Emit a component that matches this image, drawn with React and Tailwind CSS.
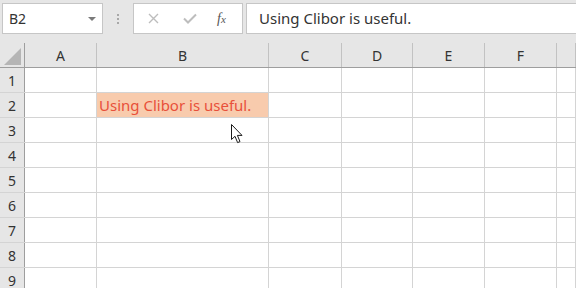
const cols = [
  { name: "A", w: "w-[72px]" },
  { name: "B", w: "w-[172px]" },
  { name: "C", w: "w-[73px]" },
  { name: "D", w: "w-[71px]" },
  { name: "E", w: "w-[72px]" },
  { name: "F", w: "w-[72px]" },
  { name: "", w: "flex-1" },
];

const rows = [1, 2, 3, 4, 5, 6, 7, 8, 9];

function Cursor() {
  return (
    <svg
      className="absolute left-[231px] top-[124px]"
      width="13"
      height="20"
      viewBox="0 0 13 20"
    >
      <path
        d="M0.5 0.5 L0.5 15.5 L4 12.3 L6.6 18.6 L9 17.6 L6.4 11.4 L11 11.4 Z"
        fill="#fff"
        stroke="#1a1a1a"
        strokeWidth="1"
        strokeLinejoin="miter"
      />
    </svg>
  );
}

export default function App() {
  return (
    <div
      className="relative w-[576px] h-[288px] overflow-hidden bg-white text-[#333]"
      style={{ fontFamily: '"Noto Sans", "Open Sans", sans-serif' }}
    >
      {/* formula bar */}
      <div className="h-[43px] bg-[#e6e6e6] flex items-start pt-[3px]">
        <div className="ml-[2px] w-[101px] h-[31px] bg-white border border-[#c6c6c6] flex items-center pl-[6px] pr-[6px]">
          <span className="text-[14px] leading-none">B2</span>
          <span className="ml-auto w-0 h-0 border-l-[4px] border-r-[4px] border-t-[4px] border-l-transparent border-r-transparent border-t-[#7a7a7a]" />
        </div>
        <div className="w-[30px] h-[31px] flex flex-col items-center justify-center gap-[2px]">
          <span className="w-[2px] h-[2px] bg-[#a8a8a8]" />
          <span className="w-[2px] h-[2px] bg-[#a8a8a8]" />
          <span className="w-[2px] h-[2px] bg-[#a8a8a8]" />
        </div>
        <div className="w-[110px] h-[31px] bg-white border border-[#c6c6c6] flex items-center">
          <svg className="ml-[14px]" width="11" height="11" viewBox="0 0 11 11">
            <path d="M1 1 L10 10 M10 1 L1 10" stroke="#bdbdbd" strokeWidth="1.4" />
          </svg>
          <svg className="ml-[24px]" width="14" height="11" viewBox="0 0 14 11">
            <path d="M1 5.5 L5 9.5 L13 1.5" stroke="#bdbdbd" strokeWidth="2" fill="none" />
          </svg>
          <span
            className="ml-[20px] text-[14px] italic text-[#555] leading-none"
            style={{ fontFamily: '"Liberation Serif", serif' }}
          >
            f<span className="text-[11px]">x</span>
          </span>
        </div>
        <div className="ml-[3px] flex-1 h-[31px] bg-white border border-r-0 border-[#c6c6c6] flex items-center pl-[12px]">
          <span className="text-[15px] leading-none">Using Clibor is useful.</span>
        </div>
      </div>

      {/* column headers */}
      <div className="flex h-[25px] bg-[#e6e6e6] border-b border-[#9e9e9e]">
        <div className="w-[25px] border-r border-[#9e9e9e] relative">
          <svg className="absolute left-[4px] top-[5px]" width="17" height="17" viewBox="0 0 17 17">
            <path d="M17 0 L17 17 L0 17 Z" fill="#b5b5b5" />
          </svg>
        </div>
        {cols.map((c, i) => (
          <div
            key={i}
            className={`${c.w} border-r border-[#c2c2c2] flex items-center justify-center text-[14px]`}
          >
            {c.name}
          </div>
        ))}
      </div>

      {/* grid rows */}
      {rows.map((r) => (
        <div key={r} className="flex h-[25px] border-b border-[#d4d4d4]">
          <div className="w-[25px] bg-[#e6e6e6] border-r border-[#9e9e9e] flex items-center justify-center text-[14px]">
            {r}
          </div>
          {cols.map((c, i) => (
            <div
              key={i}
              className={`${c.w} border-r border-[#d4d4d4] flex items-center ${
                r === 2 && i === 1 ? "bg-[#f8cbad] text-[#e8503a] pl-[2px]" : ""
              }`}
            >
              {r === 2 && i === 1 ? (
                <span className="text-[15px] leading-none whitespace-nowrap">Using Clibor is useful.</span>
              ) : null}
            </div>
          ))}
        </div>
      ))}

      <Cursor />
    </div>
  );
}
